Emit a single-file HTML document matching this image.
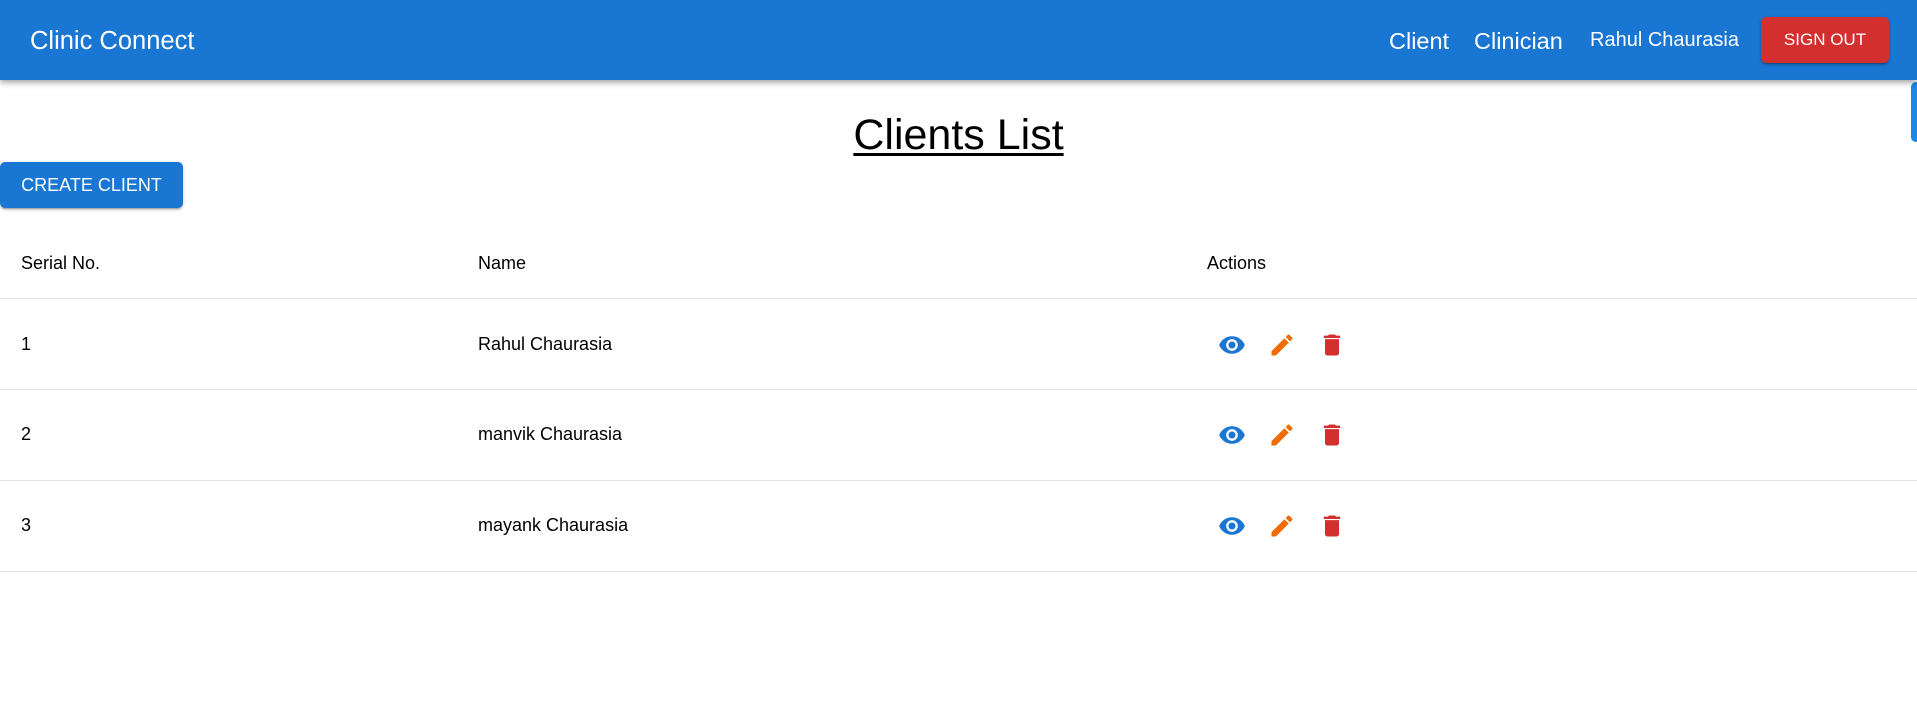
<!DOCTYPE html>
<html><head><style>
*{margin:0;padding:0;box-sizing:border-box}
body{width:1917px;height:712px;background:#fff;font-family:"Liberation Sans",Arial,sans-serif;position:relative;overflow:hidden;color:rgba(0,0,0,.87)}
.bar{position:absolute;left:0;top:0;width:1917px;height:80px;background:#1976d2;box-shadow:0 2px 4px -1px rgba(0,0,0,.2),0 4px 5px 0 rgba(0,0,0,.14),0 1px 10px 0 rgba(0,0,0,.12);color:#fff;z-index:2}
.bar span{position:absolute;white-space:nowrap}
.so{position:absolute;top:17px;height:46px;background:#d32f2f;border-radius:5px;color:#fff;font-size:17px;display:flex;align-items:center;justify-content:center;box-shadow:0 3px 1px -2px rgba(0,0,0,.2),0 2px 2px rgba(0,0,0,.14),0 1px 5px rgba(0,0,0,.12)}
h1{position:absolute;left:0;width:1917px;top:111px;text-align:center;font-weight:400;font-size:43px;text-decoration:underline;text-decoration-thickness:3px;text-underline-offset:4px;color:#000}
.cb{position:absolute;left:0;top:162px;height:46px;background:#1976d2;color:#fff;border-radius:5px;font-size:18px;display:flex;align-items:center;justify-content:center;box-shadow:0 3px 1px -2px rgba(0,0,0,.2),0 2px 2px rgba(0,0,0,.14),0 1px 5px rgba(0,0,0,.12)}
.t{position:absolute;font-size:18px;color:#000;white-space:nowrap}
.line{position:absolute;left:0;width:1917px;height:1px;background:#e0e0e0}
svg{position:absolute}
</style></head><body>
<div class="bar">
<span style="left:30px;top:27px;font-size:25.5px">Clinic Connect</span>
<span style="left:1389px;top:28px;font-size:23.5px">Client</span>
<span style="left:1474px;top:28px;font-size:23.5px">Clinician</span>
<span style="left:1590px;top:29px;font-size:20px">Rahul Chaurasia</span>
<div class="so" style="left:1761px;width:128px">SIGN OUT</div>
</div>
<div style="position:absolute;left:1911px;top:82px;width:10px;height:60px;background:#1e88e5;border-radius:5px"></div>
<h1>Clients List</h1>
<div class="cb" style="width:183px">CREATE CLIENT</div>
<div class="t" style="left:21px;top:253px">Serial No.</div>
<div class="t" style="left:478px;top:253px">Name</div>
<div class="t" style="left:1207px;top:253px">Actions</div>
<div class="line" style="top:298px"></div>
<div class="line" style="top:389px"></div>
<div class="line" style="top:480px"></div>
<div class="line" style="top:571px"></div>
<div class="t" style="left:21px;top:334px">1</div><div class="t" style="left:478px;top:334px">Rahul Chaurasia</div>
<div class="t" style="left:21px;top:424px">2</div><div class="t" style="left:478px;top:424px">manvik Chaurasia</div>
<div class="t" style="left:21px;top:515px">3</div><div class="t" style="left:478px;top:515px">mayank Chaurasia</div>
<svg width="0" height="0"><defs>
<g id="eye"><path fill="#1976d2" d="M12 4.5C7 4.5 2.730 7.610 1 12c1.730 4.390 6 7.500 11 7.500s9.270-3.110 11-7.500c-1.730-4.390-6-7.500-11-7.500zM12 17c-2.760 0-5-2.240-5-5s2.240-5 5-5 5 2.240 5 5-2.240 5-5 5zm0-8c-1.660 0-3 1.340-3 3s1.340 3 3 3 3-1.340 3-3-1.340-3-3-3z"/></g>
<g id="pen"><path fill="#ef6c00" d="M3 17.25V21h3.75L17.81 9.94l-3.75-3.75L3 17.25zM20.71 7.04c.39-.39.39-1.02 0-1.41l-2.34-2.34a.996.996 0 0 0-1.410 0l-1.830 1.830 3.750 3.750 1.830-1.830z"/></g>
<g id="del"><path fill="#d32f2f" d="M6 19c0 1.1.9 2 2 2h8c1.1 0 2-.9 2-2V7H6v12zM19 4h-3.5l-1-1h-5l-1 1H5v2h14V4z"/></g>
</defs></svg>
<svg style="left:1218px;top:331px" width="28" height="28" viewBox="0 0 24 24"><use href="#eye"/></svg>
<svg style="left:1268px;top:331px" width="28" height="28" viewBox="0 0 24 24"><use href="#pen"/></svg>
<svg style="left:1318px;top:331px" width="28" height="28" viewBox="0 0 24 24"><use href="#del"/></svg>
<svg style="left:1218px;top:421px" width="28" height="28" viewBox="0 0 24 24"><use href="#eye"/></svg>
<svg style="left:1268px;top:421px" width="28" height="28" viewBox="0 0 24 24"><use href="#pen"/></svg>
<svg style="left:1318px;top:421px" width="28" height="28" viewBox="0 0 24 24"><use href="#del"/></svg>
<svg style="left:1218px;top:512px" width="28" height="28" viewBox="0 0 24 24"><use href="#eye"/></svg>
<svg style="left:1268px;top:512px" width="28" height="28" viewBox="0 0 24 24"><use href="#pen"/></svg>
<svg style="left:1318px;top:512px" width="28" height="28" viewBox="0 0 24 24"><use href="#del"/></svg>
</body></html>
